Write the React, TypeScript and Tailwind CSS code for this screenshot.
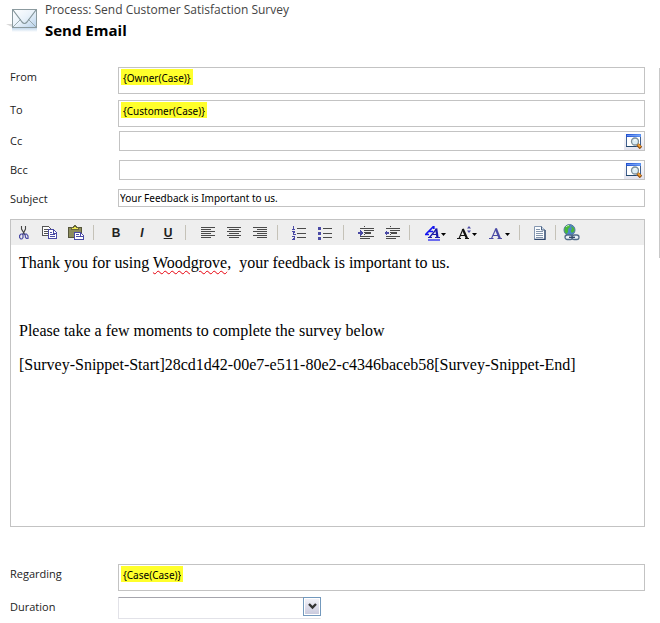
import type { ReactNode } from "react";

const INK = "#4a4a4a";
const BLUE = "#4a4aa5";

function EnvelopeIcon() {
  return (
    <svg width="31" height="26" viewBox="0 0 31 26" aria-hidden="true">
      <defs>
        <linearGradient id="paper" x1="0" y1="0" x2="1" y2="1">
          <stop offset="0" stopColor="#ffffff" />
          <stop offset="0.5" stopColor="#e9f2fa" />
          <stop offset="1" stopColor="#b5d0ea" />
        </linearGradient>
        <linearGradient id="shine" x1="0" y1="0" x2="0" y2="1">
          <stop offset="0" stopColor="#c3d8ec" />
          <stop offset="1" stopColor="#ffffff" />
        </linearGradient>
      </defs>
      <path d="M0 17h6v3z" fill="#d8d8d8" />
      <rect x="6" y="21" width="25" height="4" fill="url(#shine)" />
      <rect x="6.5" y="2.5" width="24" height="18" fill="url(#paper)" stroke="#8b9a9f" />
      <path d="M7 20l8-8M30 20l-8-8" fill="none" stroke="#9aaab0" />
      <path d="M7 3l9 12q2.500 3 5 0L30 3" fill="none" stroke="#84959a" strokeWidth="1.200" />
    </svg>
  );
}

function LookupIcon() {
  return (
    <svg width="17" height="16" viewBox="0 0 17 16" aria-hidden="true">
      <defs>
        <linearGradient id="bar" x1="0" y1="0" x2="1" y2="0">
          <stop offset="0" stopColor="#1f4fd0" />
          <stop offset="1" stopColor="#5d95f5" />
        </linearGradient>
      </defs>
      <rect x="0.500" y="1.500" width="14" height="12" fill="#fff" stroke="#3f5f8f" />
      <path d="M0 13.500h10" stroke="#24486e" />
      <rect x="0" y="1" width="15" height="3" fill="url(#bar)" />
      <path d="M1 2.500h13" stroke="#8db2fa" strokeWidth="0.600" />
      <circle cx="9" cy="8.500" r="3.500" fill="#dcedf5" stroke="#7d8f99" strokeWidth="1.300" />
      <path d="M8 7.500q1-1.500 2.500-.5" stroke="#fff" fill="none" />
      <path d="M11.500 11.500l3.500 3.500" stroke="#8a4a12" strokeWidth="3.400" />
      <path d="M12 11.500l2.500 2.500" stroke="#f0a030" strokeWidth="2" />
    </svg>
  );
}

function CutIcon() {
  return (
    <svg width="10" height="14" viewBox="0 0 10 14" fill="none" aria-hidden="true">
      <path d="M2.500 0v3l3.500 6M6.500 0v3l-3 6" stroke="#444" strokeWidth="1.100" />
      <path d="M3.500 8H2L.6 9.500v2L1.800 13h1L4 11.500V8zM6 8l.5 3.500L7.500 12.500H9V10L7.500 8z" stroke={BLUE} strokeWidth="1.200" />
    </svg>
  );
}

function CopyIcon() {
  return (
    <svg width="16" height="14" viewBox="0 0 16 14" fill="#fff" shapeRendering="crispEdges" aria-hidden="true">
      <path d="M.5 .5h6l2 2v7h-8z" stroke="#555" />
      <path d="M2 3.500h4M2 5.500h4M2 7.500h4" stroke="#555" />
      <path d="M6.500 3.500h5l3 3v6h-8z" stroke={BLUE} />
      <path d="M11.500 4v3h3" stroke={BLUE} fill="none" />
      <path d="M8 6.500h2M8 8.500h5M8 10.500h5" stroke={BLUE} />
    </svg>
  );
}

function PasteIcon() {
  return (
    <svg width="16" height="15" viewBox="0 0 16 15" shapeRendering="crispEdges" aria-hidden="true">
      <rect x=".5" y="2.500" width="13" height="10" fill="#8c8c5c" stroke="#55553a" />
      <path d="M3.500 4.500v-2h2l1-2h1l1 2h2v2z" fill="#f0ea50" stroke="#666640" />
      <path d="M6.500 7.500h6l3 3v4h-9z" fill="#fff" stroke={BLUE} />
      <path d="M12.500 8v3h3M8 9.500h3M8 11.500h6" fill="none" stroke={BLUE} />
    </svg>
  );
}

function LinesIcon({ d }: { d: string }) {
  return (
    <svg width="14" height="12" viewBox="0 0 14 12" shapeRendering="crispEdges" aria-hidden="true">
      <path d={d} stroke={INK} fill="none" />
    </svg>
  );
}

function NumberedIcon() {
  return (
    <svg width="16" height="14" viewBox="0 0 16 14" shapeRendering="crispEdges" fill="none" aria-hidden="true">
      <path d="M5 2.500h9M5 7.500h9M5 11.500h9" stroke={INK} />
      <path d="M1 .5h.5v3M0 3.500h3M0 5.500h2.500v1H1.500v1.500h2M0 10.500h2.500v3H0M1 12.500h1" stroke={BLUE} />
    </svg>
  );
}

function BulletIcon() {
  return (
    <svg width="16" height="14" viewBox="0 0 16 14" shapeRendering="crispEdges" aria-hidden="true">
      <path d="M5 2.500h9M5 7.500h9M5 11.500h9" stroke={INK} />
      <path d="M0 1h3v3H0zM0 6h3v3H0zM0 11h3v3H0z" fill={BLUE} />
    </svg>
  );
}

function IndentIcon({ arrow }: { arrow: string }) {
  return (
    <svg width="16" height="14" viewBox="0 0 16 14" shapeRendering="crispEdges" aria-hidden="true">
      <path d="M2 2.500h4M7 2.500h9M7 4.500h9M2 10.500h4M7 10.500h9M2 12.500h4M7 12.500h5" stroke={INK} />
      <path d="M7 7h6" stroke={INK} strokeWidth="2" />
      <path d="M6.500 0v14" stroke={INK} strokeDasharray="1 1" />
      <path d={arrow} fill={BLUE} />
    </svg>
  );
}

function Caret() {
  return (
    <svg width="5" height="3" viewBox="0 0 5 3" className="mt-1" aria-hidden="true">
      <path d="M0 0h5L2.500 3z" fill="#000" />
    </svg>
  );
}

function FontStyleIcon() {
  return (
    <svg width="16" height="16" viewBox="0 0 16 16" fill="none" aria-hidden="true">
      <path d="M1 9L8.500 1.500M8.800 1v3M4 6.500h4M0 9.500h4" stroke="#1414f0" strokeWidth="1.700" />
      <path d="M4.500 12.500L11.500 4" stroke="#1a1aa8" strokeWidth="1.300" />
      <path d="M11.200 3.500l1.300 9" stroke="#1a1aa8" strokeWidth="2.200" />
      <path d="M7.500 9.500h4.500M3 12.500h4M10 12.500h5" stroke="#1a1aa8" strokeWidth="1.200" />
      <path d="M3 15h12" stroke="#1414f0" strokeWidth="1.200" />
    </svg>
  );
}

function SizeIcon() {
  return (
    <svg width="15" height="14" viewBox="0 0 15 14" fill="none" aria-hidden="true">
      <path d="M2 12.500L6 3" stroke="#111" strokeWidth="1.100" />
      <path d="M5.800 3l4.200 9.500" stroke="#111" strokeWidth="2.200" />
      <path d="M3 9.500h5M0 12.500h4M8 12.500h4" stroke="#111" />
      <path d="M10 2.500h4l-2-2.500zM10 4.500h4l-2 2.500z" fill={BLUE} />
    </svg>
  );
}

function ColorIcon() {
  return (
    <svg width="14" height="14" viewBox="0 0 14 14" fill="none" aria-hidden="true">
      <path d="M2.500 12.500L7 2.500" stroke={BLUE} strokeWidth="1.100" />
      <path d="M6.800 2.500l4 10" stroke={BLUE} strokeWidth="2.200" />
      <path d="M4 9.500h5M0 12.500h4.500M8.500 12.500H13" stroke={BLUE} />
    </svg>
  );
}

function DocumentIcon() {
  return (
    <svg width="12" height="14" viewBox="0 0 12 14" aria-hidden="true">
      <path d="M.5 .5h7l3.500 3.500v9.500H.5z" fill="#fbfdff" stroke="#8496b0" />
      <path d="M11 4v9.500H.5" fill="none" stroke="#2d466b" strokeWidth="1.300" />
      <path d="M7.500 .5v3.500H11" fill="#cfdbe9" stroke="#4a6284" />
      <path d="M2 3.500h4M2 5.500h7M2 7.500h7M2 9.500h7M2 11.500h7" stroke="#8294ab" />
    </svg>
  );
}

function LinkIcon() {
  return (
    <svg width="17" height="17" viewBox="0 0 17 17" aria-hidden="true">
      <circle cx="6.500" cy="6" r="5.500" fill="#4c86c8" stroke="#56789c" />
      <path d="M1.500 5q1-4 5-4L7 3 5 5v3L3.500 10Q1 8 1.500 5zM8 2l3 2 .5 3L9 9 7.500 7 9 5z" fill="#48b838" />
      <path d="M3 3q1-1.500 3-1.500" stroke="#c5f0b0" fill="none" />
      <rect x="2" y="11" width="7.500" height="4.500" rx="2.200" fill="#edf3f9" stroke="#536b88" strokeWidth="1.300" />
      <rect x="9" y="11" width="7" height="4.500" rx="2.200" fill="#edf3f9" stroke="#536b88" strokeWidth="1.300" />
      <path d="M6 13.300h6" stroke="#33496a" strokeWidth="1.400" />
    </svg>
  );
}

function Tool({ label, size = "w-[26px]", children }: { label: string; size?: string; children: ReactNode }) {
  return (
    <button
      type="button"
      aria-label={label}
      className={`flex h-6 shrink-0 items-center justify-center font-['Liberation_Sans'] text-xs font-bold ${size}`}
    >
      {children}
    </button>
  );
}

function Divider({ gap = "mr-[9px]" }: { gap?: string }) {
  return <span className={`ml-1 h-[15px] w-px shrink-0 bg-[#c5c2b8] ${gap}`} />;
}

function Field({ id, label, className, children }: { id: string; label: string; className: string; children: ReactNode }) {
  return (
    <div className={`flex ${className}`}>
      <label htmlFor={id} className="w-[108px] shrink-0 leading-5">
        {label}
      </label>
      {children}
    </div>
  );
}

function TokenBox({ id, value }: { id: string; value: string }) {
  return (
    <div className="h-[27px] min-w-0 flex-1 border border-[#c3c3c3] px-0.5 py-px">
      <input
        id={id}
        defaultValue={value}
        className="field-sizing-content block h-4 bg-[#ffff2b] px-0.5 pt-px font-['Noto_Sans',sans-serif] text-[10px] leading-4 text-black outline-none"
      />
    </div>
  );
}

function LookupBox({ id, label }: { id: string; label: string }) {
  return (
    <div className="ml-px flex h-5 min-w-0 flex-1 border border-[#c3c3c3]">
      <input id={id} className="min-w-0 flex-1 px-1 outline-none" />
      <button
        type="button"
        aria-label={label}
        className="flex w-5 items-center justify-center bg-linear-to-b from-white to-[#e3e3ee]"
      >
        <LookupIcon />
      </button>
    </div>
  );
}

export default function App() {
  return (
    <div className="flex bg-white font-['Open_Sans','Noto_Sans',sans-serif] text-[11px] text-[#222]">
      <main className="min-w-0 flex-1 pr-3.5 pb-1 pl-2.5">
        <header className="-ml-1 flex h-[67px] pt-px">
          <div className="pt-1.5">
            <EnvelopeIcon />
          </div>
          <div className="pl-2">
            <p className="text-xs leading-[18px] text-[#444]">Process: Send Customer Satisfaction Survey</p>
            <h1 className="pt-px text-[15px] leading-5 font-bold text-black">Send Email</h1>
          </div>
        </header>

        <form>
          <Field id="from" label="From" className="mb-1.5">
            <TokenBox id="from" value="{Owner(Case)}" />
          </Field>
          <Field id="to" label="To" className="mb-1">
            <TokenBox id="to" value="{Customer(Case)}" />
          </Field>
          <Field id="cc" label="Cc" className="mb-[9px]">
            <LookupBox id="cc" label="Look up Cc" />
          </Field>
          <Field id="bcc" label="Bcc" className="mb-[9px]">
            <LookupBox id="bcc" label="Look up Bcc" />
          </Field>
          <Field id="subject" label="Subject" className="mb-2.5 h-5">
            <input
              id="subject"
              defaultValue="Your Feedback is Important to us."
              className="h-[18px] min-w-0 flex-1 border border-[#c3c3c3] px-px font-['Noto_Sans',sans-serif] text-[10px] text-black outline-none"
            />
          </Field>

          <section className="border border-[#c3c3c3]">
            <div role="toolbar" aria-label="Formatting" className="flex h-[25px] items-center overflow-hidden bg-[#eee]">
              <Tool label="Cut"><CutIcon /></Tool>
              <Tool label="Copy"><CopyIcon /></Tool>
              <Tool label="Paste"><PasteIcon /></Tool>
              <Divider />
              <Tool label="Bold">B</Tool>
              <Tool label="Italic"><i>I</i></Tool>
              <Tool label="Underline"><u>U</u></Tool>
              <Divider />
              <Tool label="Align left"><LinesIcon d="M0 .5h14M0 2.500h10M0 4.500h14M0 6.500h10M0 8.500h14M0 10.500h10" /></Tool>
              <Tool label="Align center"><LinesIcon d="M0 .5h14M2 2.500h10M0 4.500h14M2 6.500h10M0 8.500h14M2 10.500h10" /></Tool>
              <Tool label="Align right"><LinesIcon d="M0 .5h14M4 2.500h10M0 4.500h14M4 6.500h10M0 8.500h14M4 10.500h10" /></Tool>
              <Divider />
              <Tool label="Numbered list"><NumberedIcon /></Tool>
              <Tool label="Bulleted list"><BulletIcon /></Tool>
              <Divider />
              <Tool label="Increase indent"><IndentIcon arrow="M0 6h2V4l3 3-3 3V8H0z" /></Tool>
              <Tool label="Decrease indent"><IndentIcon arrow="M5 6H3V4L0 7l3 3V8h2z" /></Tool>
              <Divider />
              <Tool label="Font" size="w-8"><FontStyleIcon /><Caret /></Tool>
              <Tool label="Font size" size="w-8"><SizeIcon /><Caret /></Tool>
              <Tool label="Font color" size="w-8"><ColorIcon /><span className="w-0.5" /><Caret /></Tool>
              <Divider />
              <Tool label="Insert article" size="w-[22px]"><DocumentIcon /></Tool>
              <Divider gap="mr-1" />
              <Tool label="Insert link" size="w-[22px]"><LinkIcon /></Tool>
            </div>
            <div
              role="textbox"
              aria-label="Message"
              aria-multiline="true"
              contentEditable
              suppressContentEditableWarning
              className="min-h-[281px] space-y-4 px-2 pt-[9px] font-['Liberation_Serif',serif] text-base leading-[18px] text-black outline-none"
            >
              <p>
                Thank you for using{" "}
                <span className="underline decoration-red-600 decoration-wavy decoration-1 underline-offset-2">Woodgrove</span>,&nbsp; your
                feedback is important to us.
              </p>
              <p>&nbsp;</p>
              <p>Please take a few moments to complete the survey below</p>
              <p>[Survey-Snippet-Start]28cd1d42-00e7-e511-80e2-c4346baceb58[Survey-Snippet-End]</p>
            </div>
          </section>

          <Field id="regarding" label="Regarding" className="mt-[37px] mb-1.5">
            <TokenBox id="regarding" value="{Case(Case)}" />
          </Field>
          <Field id="duration" label="Duration" className="">
            <div className="relative h-[22px] w-[203px]">
              <select
                id="duration"
                className="h-[22px] w-full appearance-none border border-t-[#a5a5ad] border-r-transparent border-b-[#e2e2e8] border-l-[#e2e2e8] bg-white pl-1 outline-none"
              />
              <span className="pointer-events-none absolute top-0 right-0 flex h-[19px] w-[18px] items-center justify-center border border-[#7399bd] bg-linear-to-b from-[#f4f4fa] to-[#c8c8dc] shadow-[inset_0_0_0_1px_#fff]">
                <svg width="9" height="7" viewBox="0 0 9 7" fill="none" aria-hidden="true">
                  <path d="M1 1l3.500 3.500L8 1" stroke="#333" strokeWidth="2.400" />
                </svg>
              </span>
            </div>
          </Field>
        </form>
      </main>
      <div className="mt-[68px] h-[190px] w-px bg-[#c9c9c9]" />
    </div>
  );
}
